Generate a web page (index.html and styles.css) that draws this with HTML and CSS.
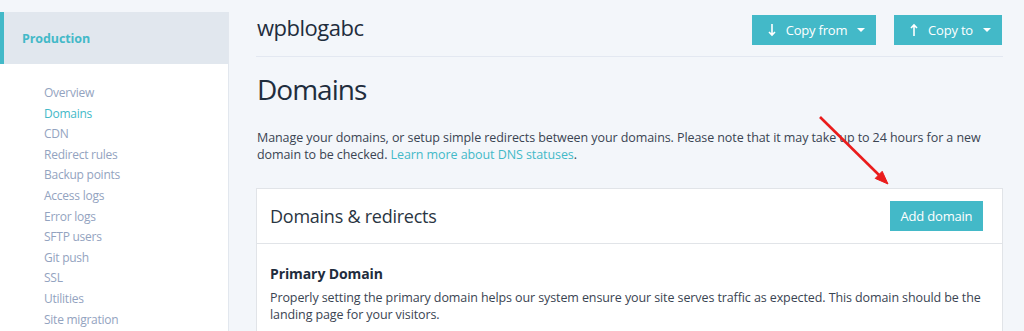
FILE: index.html
```html
<!DOCTYPE html>
<html lang="en">
  <head>
    <meta charset="UTF-8" />
    <meta name="viewport" content="width=device-width, initial-scale=1.0" />
    <title>wpblogabc - Domains</title>
    <link rel="stylesheet" href="styles.css">
  </head>
  <body>
    <div class="layout">
      <aside class="sidebar">
        <div class="env">Production</div>
        <ul class="nav">
          <li><a href="#">Overview</a></li>
          <li><a href="#" class="active">Domains</a></li>
          <li><a href="#">CDN</a></li>
          <li><a href="#">Redirect rules</a></li>
          <li><a href="#">Backup points</a></li>
          <li><a href="#">Access logs</a></li>
          <li><a href="#">Error logs</a></li>
          <li><a href="#">SFTP users</a></li>
          <li><a href="#">Git push</a></li>
          <li><a href="#">SSL</a></li>
          <li><a href="#">Utilities</a></li>
          <li><a href="#">Site migration</a></li>
        </ul>
      </aside>

      <main class="main">
        <div class="topbar">
          <h1 class="site-name">wpblogabc</h1>
          <div class="actions">
            <button class="btn btn-copy-from">
              <svg width="10" height="14" viewBox="0 0 10 14"><path d="M5 1v11M2 9l3 3 3-3" fill="none" stroke="#fff" stroke-width="1.6"/></svg>
              <span>Copy from</span>
              <span class="caret"></span>
            </button>
            <button class="btn btn-copy-to">
              <svg width="10" height="14" viewBox="0 0 10 14"><path d="M5 13V2M2 5l3-3 3 3" fill="none" stroke="#fff" stroke-width="1.6"/></svg>
              <span>Copy to</span>
              <span class="caret"></span>
            </button>
          </div>
        </div>

        <h2 class="page-title">Domains</h2>
        <p class="intro">
          Manage your domains, or setup simple redirects between your domains. Please note that it may take up to 24 hours for a new
          domain to be checked. <a href="#">Learn more about DNS statuses</a>.
        </p>

        <div class="card">
          <div class="card-head">
            <h3>Domains &amp; redirects</h3>
            <button class="btn btn-add">Add domain</button>
          </div>
          <div class="card-body">
            <h4>Primary Domain</h4>
            <p>Properly setting the primary domain helps our system ensure your site serves traffic as expected. This domain should be the landing page for your visitors.</p>
          </div>
        </div>
      </main>
    </div>

    <svg class="arrow" width="80" height="80" viewBox="0 0 80 80">
      <path d="M1 3L60 61" stroke="#ea1c1c" stroke-width="2.6" fill="none"/>
      <path d="M69 70L56.2 64.4L63.2 57.3Z" fill="#ea1c1c" stroke="#ea1c1c" stroke-width="1" stroke-linejoin="round"/>
    </svg>
  </body>
</html>
```

FILE: styles.css
```css
body {
  margin: 0;
  font-family: "Open Sans", Arial, sans-serif;
  background-color: #f3f6fa;
  color: #2e3a48;
  position: relative;
  height: 331px;
  overflow: hidden;
}

.layout {
  display: flex;
  align-items: flex-start;
}

.sidebar {
  width: 229px;
  margin-top: 12px;
  background-color: #fff;
  border-right: 1px solid #e2e7ee;
  height: 330px;
  box-sizing: border-box;
}

.env {
  height: 52px;
  background-color: #e1e7ee;
  border-left: 4px solid #43b9c8;
  padding-left: 18px;
  display: flex;
  align-items: center;
  color: #43b9c8;
  font-weight: bold;
  font-size: 12.5px;
  letter-spacing: -0.1px;
}

.nav {
  list-style: none;
  margin: 0;
  padding: 19px 0 0 44px;
}

.nav li {
  line-height: 20.6px;
  font-size: 12px;
  letter-spacing: -0.25px;
}

.nav a {
  color: #93a3c0;
  text-decoration: none;
}

.nav a.active {
  color: #43b9c8;
}

.main {
  flex: 1;
  margin: 0 21px 0 27px;
}

.topbar {
  display: flex;
  justify-content: space-between;
  align-items: flex-start;
  height: 56px;
  border-bottom: 1px solid #e3e8f1;
}

.site-name {
  margin: 12px 0 0 1px;
  font-weight: normal;
  font-size: 22px;
  line-height: 30px;
  letter-spacing: -0.5px;
  color: #1f2d3d;
}

.actions {
  display: flex;
  gap: 18px;
  margin-top: 15px;
  margin-right: 1px;
}

.btn {
  background-color: #43b9c8;
  color: #fff;
  border: none;
  font-family: "Open Sans", Arial, sans-serif;
  font-size: 13px;
  letter-spacing: -0.2px;
  height: 30px;
  padding: 0;
  display: flex;
  align-items: center;
  justify-content: center;
  gap: 9px;
  white-space: nowrap;
  cursor: pointer;
}

.btn-copy-from {
  width: 124px;
  padding-left: 4px;
}

.btn-copy-to {
  width: 108px;
  padding-left: 4px;
}

.caret {
  width: 0;
  height: 0;
  border-left: 4px solid transparent;
  border-right: 4px solid transparent;
  border-top: 4px solid #fff;
  margin-left: 1px;
}

.page-title {
  margin: 14px 0 0 1px;
  font-weight: normal;
  font-size: 28px;
  line-height: 36px;
  letter-spacing: -1px;
  color: #1f2d3d;
}

.intro {
  margin: 22px 0 0 1px;
  font-size: 12.5px;
  line-height: 17px;
  letter-spacing: -0.08px;
  color: #3a4452;
}

.intro a {
  color: #43b9c8;
  text-decoration: none;
}

.card {
  margin-top: 25px;
  background-color: #fff;
  border: 1px solid #e1e4e8;
}

.card-head {
  display: flex;
  justify-content: space-between;
  align-items: center;
  height: 54px;
  padding: 0 19px 0 13px;
  border-bottom: 1px solid #e1e4e8;
}

.card-head h3 {
  margin: 0;
  font-weight: normal;
  font-size: 18px;
  letter-spacing: -0.25px;
  color: #2a3542;
}

.btn-add {
  width: 93px;
  margin-top: -1px;
}

.card-body {
  padding: 20px 13px;
}

.card-body h4 {
  margin: 0;
  font-size: 14px;
  line-height: 20px;
  letter-spacing: -0.1px;
  color: #1f2d3d;
}

.card-body p {
  margin: 5px 0 0;
  font-size: 12.5px;
  line-height: 17px;
  letter-spacing: -0.1px;
  color: #3a4452;
}

.arrow {
  position: absolute;
  left: 819px;
  top: 114px;
}
```
